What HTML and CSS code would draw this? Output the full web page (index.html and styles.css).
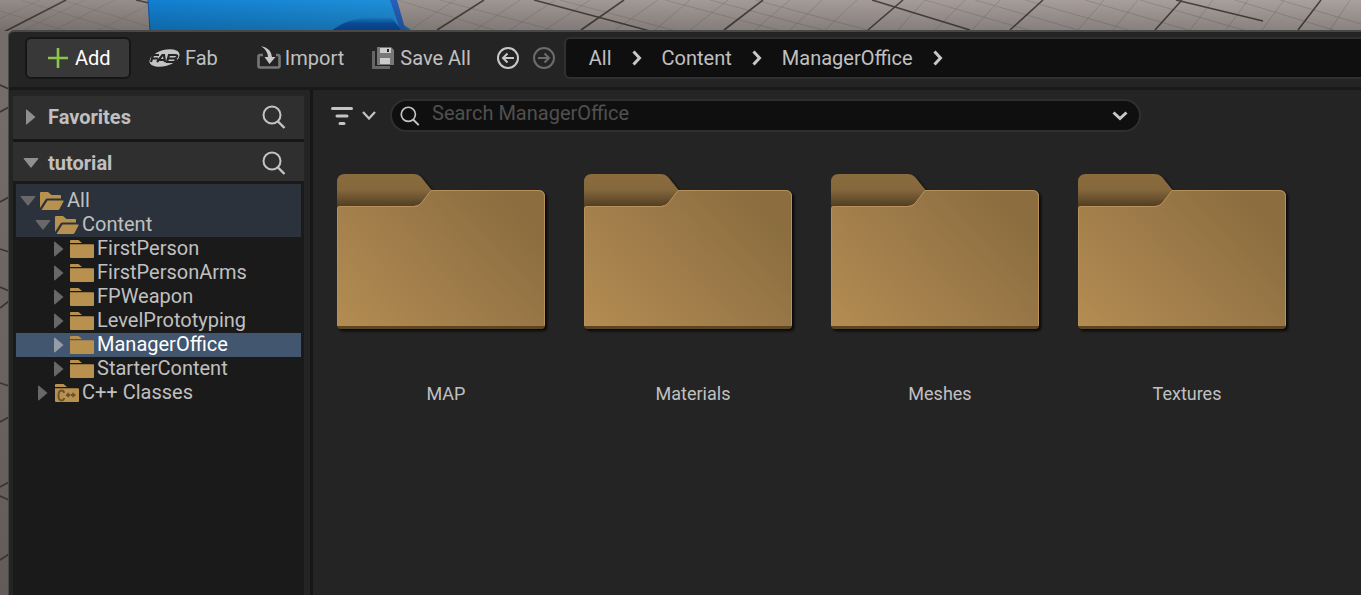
FILE: index.html
```html
<!DOCTYPE html>
<html lang="en">
<head>
<meta charset="utf-8">
<title>Content Browser</title>
<link rel="stylesheet" href="styles.css">
</head>
<body>
<svg class="viewport" viewBox="0 0 1361 595" preserveAspectRatio="xMinYMin slice" aria-hidden="true">
  <defs>
    <linearGradient id="floor" x1="0" x2="1" y1="0" y2="0"><stop offset="0" stop-color="#938b87"/><stop offset=".5" stop-color="#a39a97"/><stop offset="1" stop-color="#aaa19e"/></linearGradient>
    <linearGradient id="shade" x1="0" x2="0" y1="0" y2="1"><stop offset="0" stop-color="#000" stop-opacity="0"/><stop offset="1" stop-color="#000" stop-opacity=".2"/></linearGradient>
    <linearGradient id="edge" x1="0" x2="0" y1="0" y2="1"><stop offset="0" stop-color="#625b57" stop-opacity="0"/><stop offset="1" stop-color="#625b57"/></linearGradient>
    <linearGradient id="cube" x1="0" x2="1" y1="0" y2="0"><stop offset="0" stop-color="#1280d0"/><stop offset="1" stop-color="#1f90da"/></linearGradient>
    <linearGradient id="cubeFront" x1="0" x2="0" y1="0" y2="1"><stop offset="0" stop-color="#0c55ab" stop-opacity="0"/><stop offset=".45" stop-color="#0c55ab"/><stop offset="1" stop-color="#0a4d9c"/></linearGradient>
  </defs>
  <rect width="1361" height="595" fill="url(#floor)"/>
  <g stroke="#827a76" stroke-width="1" stroke-opacity=".55" fill="none">
    <path d="M0 11L70 32M20 0L125 32M62 0L150 27M-5 21L40 0M20 32L85 0M50 32L115 0M95 32L149 5"/>
    <path d="M440 0L560 32M398 0L500 32M560 0L680 32M665 0L785 32M710 0L830 32M755 0L875 32M925 0L1035 32M975 0L1085 32M1025 0L1135 32M1085 0L1195 32M1140 0L1250 32M1235 0L1340 32M1280 0L1361 24"/>
    <path d="M410 30L455 0M475 30L520 0M510 30L555 0M545 30L590 0M615 30L658 0M655 30L690 0M690 30L728 0M755 30L790 0M790 30L822 0M825 30L857 0M898 30L925 0M935 30L965 0M972 30L1000 0M1078 30L1104 0M1113 30L1138 0M1190 30L1213 0M1226 30L1248 0M1262 30L1284 0M1330 30L1350 0"/>
  </g>
  <g stroke="#49433f" stroke-width="1.6" fill="none">
    <path d="M0 34L66 0M136 0L149 3M724 30L763 0M868 30L903 0M1010 30L1043 0M1155 30L1182 0M1298 30L1321 0M872 0L970 30M1176 0L1263 21"/>
    <path d="M437 30L484 0M534 0L650 31M581 30L624 0"/>
  </g>
  <path d="M404 25L410 29V32H404Z" fill="#1873bd"/>
  <path d="M148 0H396L406 32H150Z" fill="url(#cube)"/>
  <path d="M330 32Q352 13 392 18L403 32Z" fill="url(#cubeFront)"/>
  <path d="M390 0H397L406 32H401Z" fill="#285fb9"/>
  <path d="M148 0L150 32" stroke="#1456ad"/>
  <rect width="1361" height="31" fill="url(#shade)"/>
  <rect y="31" width="9" height="564" fill="#746d69"/>
  <rect y="80" width="9" height="515" fill="url(#edge)"/>
  <path d="M0 85L9 89M0 112L9 107M0 202L9 197M0 249L9 252M0 287L9 291M0 308L9 301M0 383L9 386M0 422L9 417M0 487L9 482M0 496L9 500M0 560L9 554" stroke="#393431" stroke-width="1.6" fill="none"/>
</svg>

<svg class="defs" aria-hidden="true">
  <defs>
    <linearGradient id="front" gradientUnits="userSpaceOnUse" x1="0" y1="155" x2="165" y2="0"><stop offset="0" stop-color="#b38d52"/><stop offset=".45" stop-color="#a17d4b"/><stop offset=".95" stop-color="#8b6d3f"/></linearGradient>
    <linearGradient id="tab" gradientUnits="userSpaceOnUse" x1="0" x2="0" y1="0" y2="32"><stop offset="0" stop-color="#8b6c3f"/><stop offset=".5" stop-color="#84673b"/><stop offset="1" stop-color="#523f23"/></linearGradient>
    <filter id="drop" x="-5%" y="-5%" width="112%" height="112%"><feDropShadow dx="2" dy="2" stdDeviation="1.5" flood-color="#000" flood-opacity=".85"/></filter>
  </defs>
  <symbol id="search" viewBox="0 0 24 24"><circle cx="10" cy="10" r="8.500" fill="none" stroke="#c4c4c4" stroke-width="2"/><path d="M16 16.500L22.500 23" stroke="#c4c4c4" stroke-width="2.400"/></symbol>
  <symbol id="right" viewBox="0 0 10 16"><path d="M0 1.500Q0 0 1 .8L9.500 8L1 15.200Q0 16 0 14.500Z" fill="currentColor"/></symbol>
  <symbol id="down" viewBox="0 0 16 10"><path d="M1.500 0H14.500Q16 0 15.200 1L8 10L.8 1Q0 0 1.500 0Z" fill="currentColor"/></symbol>
  <symbol id="chevron" viewBox="0 0 10 16"><path d="M1.500 1.500L7.500 8L1.500 14.500" fill="none" stroke="#c8c8c8" stroke-width="3"/></symbol>
  <symbol id="closed" viewBox="0 0 24 18"><path d="M0 3V1Q0 0 1 0H8.500L12 3Z" fill="#b9914f"/><path d="M0 4.200H23Q24 4.200 24 5.200V17Q24 18 23 18H1Q0 18 0 17Z" fill="#b9914f"/></symbol>
  <symbol id="open" viewBox="0 0 24 18"><path d="M0 16V1Q0 0 1 0H8L11.500 3H20Q21 3 21 4V6.500H7.500Q6 6.500 5.500 7.500Z" fill="#b9914f"/><path d="M7.500 8.500H23Q24 8.500 23.500 9.500L19.500 17Q19 18 18 18H1.500Z" fill="#b9914f"/></symbol>
  <symbol id="folder" viewBox="0 0 212 160">
    <g filter="url(#drop)"><path d="M0 150V8Q0 0 8 0H77Q81 0 84 3L96 18L110 40H0Z" fill="url(#tab)"/>
    <path d="M0 35Q0 32 3 32H77Q81 32 84 29L94 16H201Q208 16 208 23V151Q208 155 204 155H4Q0 155 0 151Z" fill="#5c4524"/>
    <path d="M0 35Q0 32 3 32H77Q81 32 84 29L94 16H201Q208 16 208 23V152H0Z" fill="url(#front)"/></g>
    <path d="M.5 151V35Q.5 32.500 3 32.500H77Q81 32.500 84 29.500L94 16.500H201Q207.500 16.500 207.500 23V151" fill="none" stroke="#b8915a" stroke-width="1"/>
  </symbol>
</svg>

<main class="window">
  <header class="toolbar">
    <button class="add"><svg width="20" height="20" viewBox="0 0 20 20"><path d="M10 0V20M0 10H20" stroke="#8bc54a" stroke-width="2.600"/></svg>Add</button>
    <button class="tool fab"><svg width="31" height="20" viewBox="0 0 31 20"><ellipse cx="15.500" cy="10" rx="15.500" ry="8" transform="rotate(-16 15.500 10)" fill="#c4c4c4"/><path d="M2 14L4 7H10M3.500 10.500H9M8 14L13.500 7H15L16 14M10.500 12H15M18 14L20 7H26Q29 7 28 9Q27 10.500 25 10.500Q28 11 26.500 13Q26 14 24 14ZM20 10.500H26" fill="none" stroke="#242424" stroke-width="2.200"/></svg>Fab</button>
    <button class="tool import"><svg width="24" height="24" viewBox="0 0 24 24"><path d="M6 9H3Q1.500 9 1.500 10.500V20Q1.500 21.500 3 21.500H21Q22.500 21.500 22.500 20V10.500Q22.500 9 21 9H19" fill="none" stroke="#777" stroke-width="2.600"/><path d="M4 0Q14 2 15 11H18.500L12.500 18L7.500 11H11Q11 5 4 0Z" fill="#c8c8c8"/></svg>Import</button>
    <button class="tool save"><svg width="22" height="22" viewBox="0 0 22 22"><path d="M1.500 4V20.500H18" fill="none" stroke="#666" stroke-width="3"/><path d="M5 0H19L22 3V18H5Z" fill="#777"/><path d="M8 1H19V6H8ZM8 11H18V17H8Z" fill="#ccc"/><path d="M15 2H17V5H15Z" fill="#242424"/></svg>Save All</button>
    <button class="nav" aria-label="Back"><svg width="22" height="22" viewBox="0 0 22 22" fill="none" stroke="#c8c8c8" stroke-width="2"><circle cx="11" cy="11" r="10"/><path d="M17 11H6M10.500 6.500L6 11L10.500 15.500"/></svg></button>
    <button class="nav" aria-label="Forward"><svg width="22" height="22" viewBox="0 0 22 22" fill="none" stroke="#6c6c6c" stroke-width="2"><circle cx="11" cy="11" r="10"/><path d="M5 11H16M11.500 6.500L16 11L11.500 15.500"/></svg></button>
    <nav class="crumbs" aria-label="Path">
      <a href="#all">All</a><svg class="sep"><use href="#chevron"/></svg>
      <a href="#content">Content</a><svg class="sep"><use href="#chevron"/></svg>
      <a href="#office">ManagerOffice</a><svg class="sep"><use href="#chevron"/></svg>
    </nav>
  </header>
  <div class="body">
    <aside class="sidebar">
      <section class="section favorites"><svg class="arrow-right"><use href="#right"/></svg><h2>Favorites</h2><button class="find" aria-label="Search favorites"><svg width="24" height="24"><use href="#search"/></svg></button></section>
      <section class="section project"><svg class="arrow-down"><use href="#down"/></svg><h2>tutorial</h2><button class="find" aria-label="Search tutorial"><svg width="24" height="24"><use href="#search"/></svg></button></section>
      <ul class="tree">
        <li class="row root path"><svg class="arrow-down"><use href="#down"/></svg><svg class="icon"><use href="#open"/></svg><a href="#all">All</a></li>
        <li class="row level1 path"><svg class="arrow-down"><use href="#down"/></svg><svg class="icon"><use href="#open"/></svg><a href="#content">Content</a></li>
        <li class="row level2"><svg class="arrow-right"><use href="#right"/></svg><svg class="icon"><use href="#closed"/></svg><a href="#fp">FirstPerson</a></li>
        <li class="row level2"><svg class="arrow-right"><use href="#right"/></svg><svg class="icon"><use href="#closed"/></svg><a href="#arms">FirstPersonArms</a></li>
        <li class="row level2"><svg class="arrow-right"><use href="#right"/></svg><svg class="icon"><use href="#closed"/></svg><a href="#weapon">FPWeapon</a></li>
        <li class="row level2"><svg class="arrow-right"><use href="#right"/></svg><svg class="icon"><use href="#closed"/></svg><a href="#level">LevelPrototyping</a></li>
        <li class="row level2 selected"><svg class="arrow-right"><use href="#right"/></svg><svg class="icon"><use href="#closed"/></svg><a href="#office">ManagerOffice</a></li>
        <li class="row level2"><svg class="arrow-right"><use href="#right"/></svg><svg class="icon"><use href="#closed"/></svg><a href="#starter">StarterContent</a></li>
        <li class="row level1"><svg class="arrow-right"><use href="#right"/></svg><svg class="icon" viewBox="0 0 24 18"><use href="#closed" width="24" height="18"/><path d="M9 9Q9 6.500 6.500 6.500Q3.500 6.500 3.500 11.500Q3.500 16.500 6.500 16.500Q9 16.500 9 14M11 11H15.500M13.200 8.800V13.200M16 11H20.500M18.200 8.800V13.200" fill="none" stroke="#6b532d" stroke-width="1.900"/></svg><a href="#cpp">C++ Classes</a></li>
      </ul>
    </aside>
    <section class="content">
      <div class="filterbar">
        <button class="filter" aria-label="Filters"><svg width="22" height="18" viewBox="0 0 22 18" stroke="#c4c4c4" stroke-width="3" stroke-linecap="round"><path d="M1.500 1.500H20.500M6 9H16M9 16.500H13"/></svg><svg width="14" height="9" viewBox="0 0 14 9" fill="none" stroke="#c4c4c4" stroke-width="2.200"><path d="M1 1L7 7.500L13 1"/></svg></button>
        <label class="search"><svg width="20" height="20"><use href="#search"/></svg><input type="text" placeholder="Search ManagerOffice" aria-label="Search ManagerOffice"><svg width="16" height="10" viewBox="0 0 16 10" fill="none" stroke="#c8c8c8" stroke-width="3"><path d="M1.500 1.500L8 7.500L14.500 1.500"/></svg></label>
      </div>
      <div class="tiles">
        <a class="tile" href="#map"><svg class="art"><use href="#folder"/></svg><span>MAP</span></a>
        <a class="tile" href="#materials"><svg class="art"><use href="#folder"/></svg><span>Materials</span></a>
        <a class="tile" href="#meshes"><svg class="art"><use href="#folder"/></svg><span>Meshes</span></a>
        <a class="tile" href="#textures"><svg class="art"><use href="#folder"/></svg><span>Textures</span></a>
      </div>
    </section>
  </div>
</main>
</body>
</html>
```

FILE: styles.css
```css
* { box-sizing: border-box; }
body {
  margin: 0;
  height: 100vh;
  padding: 30px 0 0 8px;
  overflow: hidden;
  background: #746d69;
  color: #c0c0c0;
  font: 20px/24px Roboto, sans-serif;
}
button { border: 0; padding: 0; background: none; color: inherit; font: inherit; display: flex; align-items: center; flex: none; }
a { color: inherit; text-decoration: none; white-space: nowrap; }
svg { flex: none; display: block; }
.viewport { position: absolute; inset: 0; width: 100%; height: 100%; z-index: -1; }
.defs { position: absolute; width: 0; height: 0; }

.window {
  height: 100%;
  display: flex;
  flex-direction: column;
  background: #242424;
  border: solid #484848;
  border-width: 2px 0 0 1px;
  border-top-left-radius: 6px;
}
.toolbar {
  display: flex;
  align-items: center;
  height: 58px;
  padding: 0 0 4px 16px;
  border-bottom: 3px solid #191919;
}
.add {
  height: 42px;
  width: 106px;
  padding-left: 21px;
  gap: 7px;
  border: 2px solid #161616;
  border-radius: 6px;
  background: #383838;
  color: #fff;
}
.tool { gap: 5px; }
.fab { margin-left: 18px; }
.import { margin-left: 39px; gap: 4px; }
.save { margin-left: 28px; gap: 6px; }
.nav { margin-left: 14px; }
.save + .nav { margin-left: 26px; }
.crumbs {
  flex: 1;
  display: flex;
  align-items: center;
  gap: 20px;
  height: 42px;
  margin-left: 9px;
  padding-left: 23px;
  border: 2px solid #303030;
  border-right: 0;
  border-radius: 6px 0 0 6px;
  background: #0f0f0f;
}
.sep { width: 10px; height: 16px; }

.body { flex: 1; min-height: 0; display: flex; }
.sidebar {
  flex: none;
  width: 303px;
  display: flex;
  flex-direction: column;
  margin-left: 1px;
  padding: 6px 6px 0 3px;
  border-right: 3px solid #161616;
}
.section { display: flex; align-items: center; padding: 0 18px 0 13px; background: #2f2f2f; color: #8f8f8f; }
.favorites { height: 43px; padding-bottom: 2px; }
.project { height: 42px; padding-top: 2px; padding-left: 10px; border-top: 3px solid #161616; }
.section h2 { flex: 1; margin: 0 0 0 12px; font-size: 20px; line-height: 24px; font-weight: 700; color: #c0c0c0; }
.arrow-right { width: 10px; height: 16px; }
.arrow-down { width: 16px; height: 10px; }
.project h2 { margin-left: 9px; }

.tree { flex: 1; margin: 0; padding: 3px; list-style: none; background: #1a1a1a; color: #686868; }
.row { display: flex; align-items: center; height: 24px; color: #686868; }
.row a { color: #c0c0c0; margin-bottom: 2px; margin-left: 3px; }
.icon { width: 24px; height: 18px; }
.path { background: #2b323b; }
.root { height: 29px; padding: 5px 0 0 4px; }
.root .icon, .level1 .arrow-down + .icon { margin-left: 4px; }
.level1 { padding-left: 19px; }
.level1 .arrow-right { margin: 0 7px 0 3px; }
.level2 { padding-left: 38px; }
.level2 .icon { margin-left: 6px; }
.selected { background: #42566f; color: #949da8; }
.selected a { color: #fff; }

.content { flex: 1; min-width: 0; }
.filterbar { display: flex; align-items: center; padding: 9px 0 0 18px; }
.filter { gap: 9px; }
.search {
  flex: 0 1 751px;
  min-width: 0;
  display: flex;
  align-items: center;
  gap: 12px;
  height: 33px;
  margin-left: 14px;
  padding: 0 11px 0 8px;
  border: 2px solid #2f2f2f;
  border-radius: 17px;
  background: #0f0f0f;
}
.search input { flex: 1; min-width: 0; padding: 0 0 6px; border: 0; outline: 0; background: none; color: #c0c0c0; font: inherit; }
.search input::placeholder { color: #505050; opacity: 1; }
.tiles { display: flex; flex-wrap: wrap; gap: 35px; padding: 42px 0 0 24px; }
.tile { width: 212px; font-size: 18px; text-align: center; }
.art { width: 212px; height: 160px; margin-bottom: 48px; }
.tile span { display: block; padding-left: 6px; }
```
